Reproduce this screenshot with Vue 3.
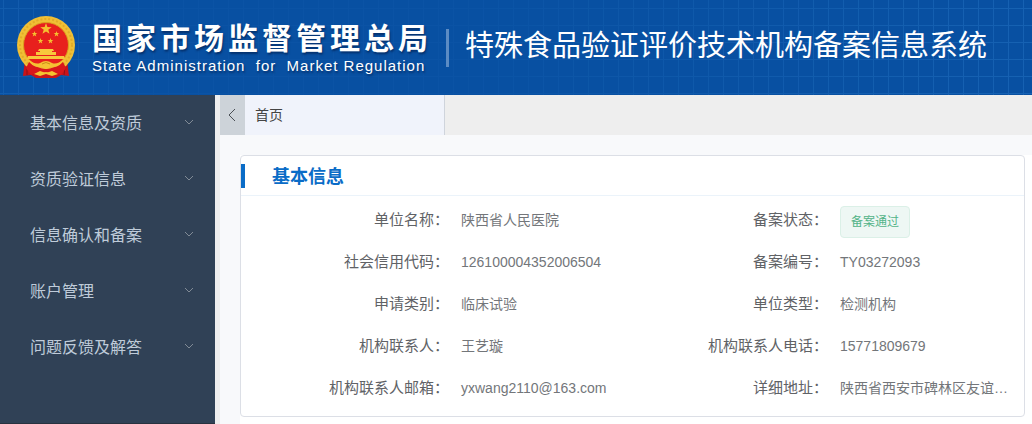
<script setup>
import { ref } from 'vue'

const menu = ['基本信息及资质', '资质验证信息', '信息确认和备案', '账户管理', '问题反馈及解答']
const open = ref('')

const fields = [
  { label: '单位名称', value: '陕西省人民医院' },
  { label: '备案状态', value: '备案通过', tag: true },
  { label: '社会信用代码', value: '126100004352006504' },
  { label: '备案编号', value: 'TY03272093' },
  { label: '申请类别', value: '临床试验' },
  { label: '单位类型', value: '检测机构' },
  { label: '机构联系人', value: '王艺璇' },
  { label: '机构联系人电话', value: '15771809679' },
  { label: '机构联系人邮箱', value: 'yxwang2110@163.com' },
  { label: '详细地址', value: '陕西省西安市碑林区友谊…' }
]

const star = '0,-10 2.3,-3.2 9.5,-3.1 3.8,1.2 5.9,8.1 0,4 -5.9,8.1 -3.8,1.2 -9.5,-3.1 -2.3,-3.2'
const stars = [
  { x: 30, y: 13, s: 0.6 },
  { x: 18.5, y: 18, s: 0.3 },
  { x: 40.5, y: 18, s: 0.3 },
  { x: 24.5, y: 25, s: 0.3 },
  { x: 34.5, y: 25, s: 0.3 }
]
</script>

<template>
  <div class="page">
    <header class="header">
      <svg class="emblem" viewBox="0 0 60 63" aria-hidden="true">
        <path d="M9 44 L7 60 L15 59 L20 62 L40 62 L45 59 L53 60 L51 44Z" fill="#c9141a" />
        <path d="M11 51 L11 59 M16 53 L17 59 M49 51 L48 59 M44 53 L43 59" stroke="#8f0f16" stroke-width="1" />
        <circle cx="30" cy="29" r="29" fill="#f0bf35" />
        <circle cx="30" cy="29" r="26" fill="none" stroke="#e2ab28" stroke-width="2" stroke-dasharray="2 2" />
        <circle cx="30" cy="29" r="22.5" fill="#e8201d" stroke="#dba01f" stroke-width="1" />
        <polygon
          v-for="(s, i) in stars"
          :key="i"
          :points="star"
          :transform="`translate(${s.x} ${s.y}) scale(${s.s})`"
          fill="#f5c030"
        />
        <path d="M23 33 H37 L38 35 H22Z M24 35 H36 V37 H24Z M20 36 H40 V39 H20Z M12 40 H48 L49 43 H11Z" fill="#f8c83c" />
        <path d="M13 46 L10 52 L15 59 Q22 58 30 56 Q38 58 45 59 L50 52 L47 46 Q38 53 30 53 Q22 53 13 46Z" fill="#d9181b" />
        <path d="M12 43 Q19 49 24 47 Q30 43 36 47 Q41 49 48 43 Q44 52 36 51 L30 53 L24 51 Q16 52 12 43Z" fill="#f5c233" />
        <path d="M26 48 Q30 45 34 48" fill="none" stroke="#c98d18" stroke-width="1" />
        <path d="M18 58 L24 55 L30 57 L36 55 L42 58 L36 60 L30 58 L24 60Z" fill="#f4c431" />
      </svg>
      <div class="agency">
        <div class="agency-cn">国家市场监督管理总局</div>
        <div class="agency-en">State Administration&nbsp; for&nbsp; Market Regulation</div>
      </div>
      <h1 class="system">特殊食品验证评价技术机构备案信息系统</h1>
    </header>

    <div class="body">
      <nav class="sidebar">
        <button
          v-for="item in menu"
          :key="item"
          type="button"
          class="menu-item"
          :aria-expanded="open === item"
          @click="open = open === item ? '' : item"
        >
          <span>{{ item }}</span>
          <svg class="chevron" viewBox="0 0 12 12" aria-hidden="true">
            <path d="M2 4 L6 8 L10 4" />
          </svg>
        </button>
      </nav>

      <div class="main">
        <div class="tabs">
          <button type="button" class="scroll" aria-label="向左">
            <svg viewBox="0 0 14 14" aria-hidden="true"><path d="M9 1 L3 7 L9 13" /></svg>
          </button>
          <a href="#" class="tab">首页</a>
        </div>
        <main class="content">
          <section class="card">
            <div class="card-head">
              <h2>基本信息</h2>
            </div>
            <dl class="fields">
              <div v-for="f in fields" :key="f.label" class="field">
                <dt>{{ f.label }}：</dt>
                <dd><span v-if="f.tag" class="tag">{{ f.value }}</span><template v-else>{{ f.value }}</template></dd>
              </div>
            </dl>
          </section>
        </main>
      </div>
    </div>
  </div>
</template>

<style>
body {
  margin: 0;
}
</style>

<style scoped>
* {
  box-sizing: border-box;
}
.page {
  display: flex;
  flex-direction: column;
  min-height: 100vh;
  font-family: "Liberation Sans", "Noto Sans CJK SC", sans-serif;
  font-size: 14px;
}
.header {
  position: relative;
  display: flex;
  align-items: center;
  height: 95px;
  padding-left: 16px;
  background: #0850a2;
  color: #fff;
  white-space: nowrap;
  overflow: hidden;
}
.header::before {
  content: "";
  position: absolute;
  inset: 0;
  background:
    repeating-linear-gradient(90deg, transparent 0 3px, #2371c0 3px 4px, transparent 4px 15px),
    repeating-linear-gradient(180deg, transparent 0 8px, #2371c0 8px 9px, transparent 9px 17px);
  mask-image: linear-gradient(90deg, rgba(0, 0, 0, 0.4), rgba(0, 0, 0, 0.1) 15%, rgba(0, 0, 0, 0.1) 45%, rgba(0, 0, 0, 0.55));
}
.header > * {
  position: relative;
}
.emblem {
  width: 60px;
  height: 63px;
  margin-right: 16px;
}
.agency {
  padding-right: 14px;
  text-shadow: 1px 2px 2px rgba(0, 20, 60, 0.5);
}
.agency-cn {
  font-size: 30px;
  line-height: 36px;
  font-weight: 700;
  letter-spacing: 4px;
}
.agency-en {
  font-size: 15px;
  line-height: 18px;
  letter-spacing: 1px;
}
.system {
  margin: 0;
  padding: 0 0 4px 16px;
  border-left: 3px solid #5c8cc4;
  font-size: 29px;
  line-height: 34px;
  font-weight: 400;
}
.body {
  display: flex;
  flex: 1;
}
.sidebar {
  flex: none;
  width: 215px;
  background: #304156;
  border-bottom: 1px solid #28323f;
}
.menu-item {
  display: flex;
  align-items: center;
  justify-content: space-between;
  width: 100%;
  height: 56px;
  padding: 0 20px 2px 30px;
  border: 0;
  background: none;
  color: #bfcbd9;
  font: inherit;
  font-size: 16px;
  cursor: pointer;
}
.chevron {
  width: 12px;
  height: 12px;
  fill: none;
  stroke: #818b96;
  stroke-width: 1;
}
.main {
  flex: 1;
  min-width: 0;
  display: flex;
  flex-direction: column;
  border-left: 5px solid #eee;
}
.tabs {
  display: flex;
  height: 40px;
  background: #eee;
}
.scroll {
  display: flex;
  align-items: center;
  justify-content: center;
  width: 25px;
  padding: 0;
  border: 0;
  background: #cdd3d9;
}
.scroll svg {
  width: 14px;
  height: 14px;
  fill: none;
  stroke: #4a4f55;
}
.tab {
  width: 200px;
  padding-left: 10px;
  border-right: 1px solid #cfd4dc;
  background: #f0f3fb;
  color: #444;
  line-height: 40px;
  text-decoration: none;
}
.content {
  flex: 1;
  padding-right: 7px;
  border: solid #f8f9fb;
  border-width: 20px 0 0 20px;
  background: #fff;
}
.card {
  border: 1px solid #dcdfe6;
  border-radius: 4px;
  background: #fff;
}
.card-head {
  padding: 8px 0 7px;
  border-bottom: 1px solid #ebf3fa;
}
.card-head h2 {
  margin: 0;
  padding: 2px 0 0 27px;
  border-left: 4px solid #0a6cc7;
  color: #0a6cc7;
  font-size: 18px;
  line-height: 22px;
}
.fields {
  display: grid;
  grid-template-columns: 1fr 1fr;
  margin: 0;
  padding: 3px 15px 7px 10px;
}
.field {
  display: flex;
  align-items: center;
  height: 42px;
  min-width: 0;
}
dt {
  flex: none;
  width: 198px;
  color: #606266;
  font-size: 15px;
  line-height: 20px;
  text-align: right;
}
dd {
  flex: 1;
  min-width: 0;
  margin: 0 0 0 12px;
  color: #73767a;
  line-height: 20px;
  white-space: nowrap;
}
.tag {
  display: inline-block;
  height: 32px;
  margin-top: 4px;
  padding: 0 10px;
  border: 1px solid #dbf0e7;
  border-radius: 4px;
  background: #eef7f4;
  color: #52b388;
  font-size: 12px;
  line-height: 31px;
  vertical-align: middle;
}
</style>
